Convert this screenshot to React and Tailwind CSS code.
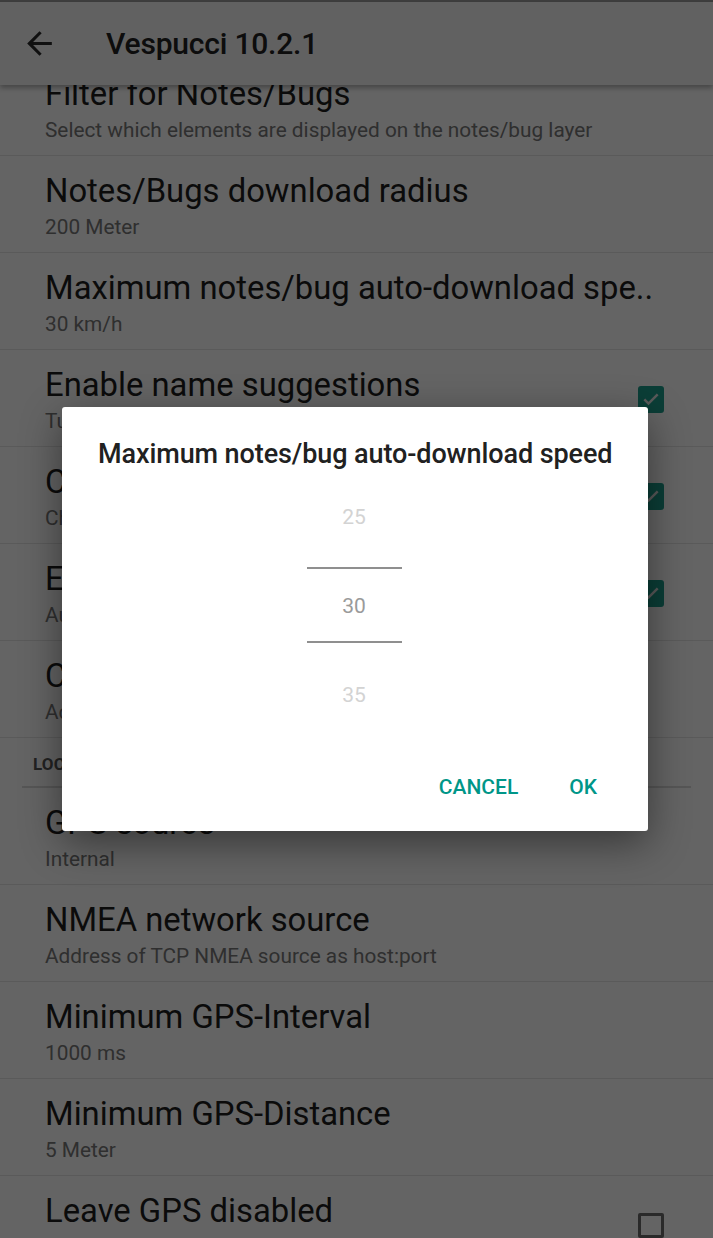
const ITEMS = [
  { title: 'Filter for Notes/Bugs', sub: 'Select which elements are displayed on the notes/bug layer' },
  { title: 'Notes/Bugs download radius', sub: '200 Meter' },
  { title: 'Maximum notes/bug auto-download spe..', sub: '30 km/h' },
  { title: 'Enable name suggestions', sub: 'Turn on name suggestions for name tags', check: true },
  { title: 'Check for closed ways', sub: 'Check that ways are closed', check: true },
  { title: 'Enable auto-preset', sub: 'Automatically apply best matching preset', check: true },
  { title: 'Custom imagery', sub: 'Add or edit custom imagery' },
];

const GPS_ITEMS = [
  { title: 'GPS source', sub: 'Internal' },
  { title: 'NMEA network source', sub: 'Address of TCP NMEA source as host:port' },
  { title: 'Minimum GPS-Interval', sub: '1000 ms' },
  { title: 'Minimum GPS-Distance', sub: '5 Meter' },
  { title: 'Leave GPS disabled', sub: 'Do not turn on GPS automatically', check: false },
];

function Checkbox({ checked }) {
  if (checked) {
    return (
      <div className="w-[26px] h-[27px] rounded-[3px] bg-[#1c9c8a] flex items-center justify-center">
        <svg width="20" height="20" viewBox="0 0 24 24" fill="none">
          <path d="M4 12.5l5 5L20 6.5" stroke="#e0e0e0" strokeWidth="3" />
        </svg>
      </div>
    );
  }
  return <div className="w-[26px] h-[25px] rounded-[2px] border-[3px] border-[#6a6a6a]" />;
}

function Pref({ item }) {
  return (
    <div className="h-[97px] border-b border-[#e2e2e2] flex items-start">
      <div className="flex-1 pl-[45px] pt-[16px] min-w-0">
        <div className="text-[32.8px] leading-[38px] text-[#1d1d1d] whitespace-nowrap">{item.title}</div>
        <div className="mt-[5px] text-[20.8px] leading-[24px] text-[#757575] whitespace-nowrap">{item.sub}</div>
      </div>
      {item.check !== undefined && (
        <div className="w-[76px] h-full flex items-center pl-[1px] pt-[2px]">
          <Checkbox checked={item.check} />
        </div>
      )}
    </div>
  );
}

export default function App() {
  return (
    <div className="relative w-full h-[1238px] overflow-hidden bg-[#fafafa] font-['Roboto',sans-serif]">
      <div className="h-[2px] bg-[#9a9a9a]" />
      <div className="relative z-10 h-[83px] bg-[#f2f2f2] shadow-[0_3px_5px_rgba(0,0,0,0.3)] flex items-center">
        <svg className="ml-[21px]" width="37" height="37" viewBox="0 0 24 24" fill="#2a2a2a">
          <path d="M20 11H7.83l5.59-5.59L12 4l-8 8 8 8 1.41-1.41L7.83 13H20v-2z" />
        </svg>
        <div className="ml-[48px] text-[30px] font-medium text-[#212121] tracking-[-0.2px]">Vespucci 10.2.1</div>
      </div>
      <div className="-mt-[26px]">
        {ITEMS.map((it) => (
          <Pref key={it.title} item={it} />
        ))}
        <div className="h-[50px] mx-[22px] border-b-2 border-[#d6d6d6] flex items-center pl-[11px] pt-[6px]">
          <span className="text-[17px] font-bold text-[#555555] tracking-[0.2px]">LOCATION</span>
        </div>
        {GPS_ITEMS.map((it) => (
          <Pref key={it.title} item={it} />
        ))}
      </div>

      <div className="absolute inset-0 z-20 bg-black/60 flex items-center">
        <div className="ml-[62px] w-[586px] h-[424px] bg-white rounded-[3px] shadow-[0_12px_40px_rgba(0,0,0,0.45)] flex flex-col">
          <div className="pt-[31px] pl-[36px] text-[27px] leading-[32px] font-medium text-[#212121] whitespace-nowrap tracking-[-0.1px]">
            Maximum notes/bug auto-download speed
          </div>
          <div className="mt-[24px] self-center w-[95px] -translate-x-[1px] flex flex-col items-center text-[21px]">
            <div className="h-[46px] leading-[46px] text-[#d3d3d3]">25</div>
            <div className="mt-[27px] w-full h-[2px] bg-[#8f8f8f]" />
            <div className="mt-[14px] h-[46px] leading-[46px] text-[#9a9a9a]">30</div>
            <div className="mt-[12px] w-full h-[2px] bg-[#8f8f8f]" />
            <div className="mt-[29px] h-[46px] leading-[46px] text-[#d3d3d3]">35</div>
          </div>
          <div className="mt-[54px] flex justify-end gap-[51px] pr-[51px] text-[21px] leading-[30px] font-medium text-[#009688]">
            <span>CANCEL</span>
            <span>OK</span>
          </div>
        </div>
      </div>
    </div>
  );
}
